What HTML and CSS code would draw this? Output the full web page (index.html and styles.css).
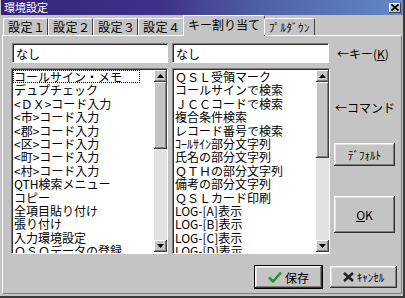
FILE: index.html
```html
<!DOCTYPE html>
<html lang="ja">
<head>
  <meta charset="UTF-8" />
  <title>環境設定</title>
  <link rel="stylesheet" href="styles.css">
</head>
<body>
  <div class="window">
    <div class="titlebar">
      <span class="title">環境設定</span>
      <span class="close">
        <svg width="8" height="7" viewBox="0 0 8 7"><path d="M0.5 0.5 L7.5 6.5 M7.5 0.5 L0.5 6.5" stroke="#000" stroke-width="1.8"/></svg>
      </span>
    </div>

    <div class="tabs">
      <div class="tab">設定１</div>
      <div class="tab">設定２</div>
      <div class="tab">設定３</div>
      <div class="tab">設定４</div>
      <div class="tab active">キー割り当て</div>
      <div class="tab">ﾌﾟﾙﾀﾞｳﾝ</div>
    </div>

    <div class="panel">
      <div class="grid">
        <div class="field">なし</div>
        <div class="field">なし</div>
        <div class="side-label key">←キー(<u>K</u>)</div>

        <div class="listbox">
          <ul class="items">
            <li class="focus">コールサイン・メモ</li>
            <li>デュプチェック</li>
            <li>&lt;ＤＸ&gt;コード入力</li>
            <li>&lt;市&gt;コード入力</li>
            <li>&lt;郡&gt;コード入力</li>
            <li>&lt;区&gt;コード入力</li>
            <li>&lt;町&gt;コード入力</li>
            <li>&lt;村&gt;コード入力</li>
            <li>QTH検索メニュー</li>
            <li>コピー</li>
            <li>全項目貼り付け</li>
            <li>張り付け</li>
            <li>入力環境設定</li>
            <li>ＱＳＯデータの登録</li>
          </ul>
          <div class="scrollbar">
            <div class="arrow"><svg width="7" height="4" viewBox="0 0 7 4"><path d="M3.5 0 L7 4 L0 4 Z" fill="#000"/></svg></div>
            <div class="thumb short"></div>
            <div class="track"></div>
            <div class="arrow"><svg width="7" height="4" viewBox="0 0 7 4"><path d="M0 0 L7 0 L3.5 4 Z" fill="#000"/></svg></div>
          </div>
        </div>

        <div class="listbox">
          <ul class="items">
            <li>ＱＳＬ受領マーク</li>
            <li>コールサインで検索</li>
            <li>ＪＣＣコードで検索</li>
            <li>複合条件検索</li>
            <li>レコード番号で検索</li>
            <li>ｺｰﾙｻｲﾝ部分文字列</li>
            <li>氏名の部分文字列</li>
            <li>ＱＴＨの部分文字列</li>
            <li>備考の部分文字列</li>
            <li>ＱＳＬカード印刷</li>
            <li>LOG-[A]表示</li>
            <li>LOG-[B]表示</li>
            <li>LOG-[C]表示</li>
            <li>LOG-[D]表示</li>
          </ul>
          <div class="scrollbar">
            <div class="arrow"><svg width="7" height="4" viewBox="0 0 7 4"><path d="M3.5 0 L7 4 L0 4 Z" fill="#000"/></svg></div>
            <div class="thumb long"></div>
            <div class="track"></div>
            <div class="arrow"><svg width="7" height="4" viewBox="0 0 7 4"><path d="M0 0 L7 0 L3.5 4 Z" fill="#000"/></svg></div>
          </div>
        </div>

        <div class="side">
          <div class="side-label">←コマンド</div>
          <button class="btn default-btn">ﾃﾞﾌｫﾙﾄ</button>
          <button class="btn ok-btn"><span><u>O</u>K</span></button>
        </div>
      </div>

      <div class="footer">
        <button class="btn save-btn">
          <svg width="14" height="12" viewBox="0 0 14 12"><path d="M1 6.5 L5 10.5 L13 1.5" fill="none" stroke="#1f9a2a" stroke-width="2.6"/></svg>
          <span>保存</span>
        </button>
        <button class="btn cancel-btn">
          <svg width="11" height="10" viewBox="0 0 11 10"><path d="M1 1 L10 9 M10 1 L1 9" stroke="#222" stroke-width="2.6"/></svg>
          <span>ｷｬﾝｾﾙ</span>
        </button>
      </div>
    </div>
  </div>
</body>
</html>
```

FILE: styles.css
```css
body {
  margin: 0;
  font-family: "Noto Sans CJK JP", "DejaVu Sans", sans-serif;
  font-size: 12px;
  color: #000;
  background: #c4c4c4;
}

.window {
  width: 405px;
  height: 298px;
  background: #c4c4c4;
  display: flex;
  flex-direction: column;
  box-sizing: border-box;
  border-right: 2px solid #3a3a3a;
  border-bottom: 2px solid #3a3a3a;
}

.titlebar {
  height: 15px;
  margin: 0 0 0 1px;
  padding: 0 2px 0 3px;
  background: linear-gradient(to right, #34247c, #3f3189 40%, #5060a8 65%, #6289c8);
  display: flex;
  align-items: center;
  justify-content: space-between;
}

.title {
  color: #fff;
  font-size: 11px;
  line-height: 15px;
}

.close {
  width: 12px;
  height: 10px;
  background: #c4c4c4;
  box-shadow: inset -1px -1px #404040, inset 1px 1px #fff;
  display: flex;
  align-items: center;
  justify-content: center;
}

/* tabs */
.tabs {
  height: 20px;
  display: flex;
  align-items: flex-end;
  padding-left: 3px;
  position: relative;
  z-index: 1;
}

.tab {
  height: 17px;
  padding: 0 4px;
  box-sizing: border-box;
  width: 45px;
  border-top: 1px solid #fff;
  border-left: 1px solid #fff;
  border-right: 1px solid #404040;
  border-radius: 2px 2px 0 0;
  font-size: 12px;
  line-height: 16px;
  text-align: center;
  white-space: nowrap;
  letter-spacing: 0.5px;
}

.tab:nth-child(4) {
  width: 46px;
}

.tab.active {
  width: 82px;
  height: 21px;
  margin: 0 -1px -1px -1px;
  background: #c4c4c4;
  line-height: 17px;
  letter-spacing: 0;
  padding: 0 2px;
}

.tab:last-child {
  width: 51px;
  font-size: 11px;
}

/* panel */
.panel {
  flex: 1;
  margin: 0 1px 2px 2px;
  border-top: 1px solid #fff;
  border-left: 1px solid #fff;
  border-right: 1px solid #808080;
  border-bottom: 1px solid #808080;
  padding: 7px 0 0 8px;
}

.grid {
  display: grid;
  grid-template-columns: 157px 158px 62px;
  grid-template-rows: 20px 186px;
  column-gap: 4px;
  row-gap: 5px;
}

.field {
  background: #fff;
  border-top: 1px solid #808080;
  border-left: 1px solid #808080;
  border-right: 1px solid #fff;
  border-bottom: 1px solid #fff;
  box-shadow: inset 1px 1px #303030;
  padding-left: 3px;
  line-height: 19px;
  margin-left: 1px;
}

.field:nth-child(2) {
  margin-left: 0;
  margin-right: 1px;
}

.side-label {
  padding-left: 3px;
  white-space: nowrap;
  line-height: 20px;
}

.side-label.key {
  padding-top: 1px;
}

/* list boxes */
.listbox {
  background: #fff;
  border-top: 1px solid #808080;
  border-left: 1px solid #808080;
  border-right: 1px solid #fff;
  border-bottom: 1px solid #fff;
  box-shadow: inset 1px 1px #303030;
  display: flex;
  overflow: hidden;
}

.items {
  flex: 1;
  list-style: none;
  margin: 0;
  padding: 1px 0 0 1px;
  overflow: hidden;
}

.items li {
  height: 13.4px;
  line-height: 13.4px;
  padding-left: 1px;
  white-space: nowrap;
}

.items li.focus {
  outline: 1px dotted #000;
  outline-offset: -1px;
  margin-right: 14px;
}

.scrollbar {
  width: 13px;
  display: flex;
  flex-direction: column;
  background: #e2e2e2;
  margin: 1px 0 1px 0;
}

.arrow {
  height: 12px;
  background: #c4c4c4;
  box-shadow: inset -1px -1px #404040, inset 1px 1px #fff, inset -2px -2px #808080;
  display: flex;
  align-items: center;
  justify-content: center;
}

.thumb {
  background: #c4c4c4;
  box-shadow: inset -1px -1px #404040, inset 1px 1px #fff, inset -2px -2px #808080;
}

.thumb.short {
  height: 67px;
}

.thumb.long {
  height: 76px;
}

.track {
  flex: 1;
}

/* side column */
.side {
  display: flex;
  flex-direction: column;
  align-items: flex-start;
}

.side .side-label {
  margin-top: 30px;
  padding-left: 1px;
}

.btn {
  font-family: inherit;
  font-size: 12px;
  background: #c4c4c4;
  border: none;
  padding: 0;
  color: #000;
  box-shadow: inset -1px -1px #303030, inset 1px 1px #fff, inset -2px -2px #808080, inset 2px 2px #e0e0e0;
  display: flex;
  align-items: center;
  justify-content: center;
  gap: 3px;
}

.default-btn {
  width: 61px;
  height: 23px;
  margin-top: 25px;
  font-size: 11px;
}

.ok-btn {
  width: 61px;
  height: 37px;
  margin-top: 30px;
}

/* footer */
.footer {
  display: flex;
  justify-content: flex-end;
  gap: 8px;
  margin-top: 12px;
  padding-right: 4px;
}

.save-btn {
  width: 67px;
  height: 22px;
  outline: 1px solid #000;
}

.cancel-btn {
  width: 67px;
  height: 22px;
  font-size: 11px;
}
```
